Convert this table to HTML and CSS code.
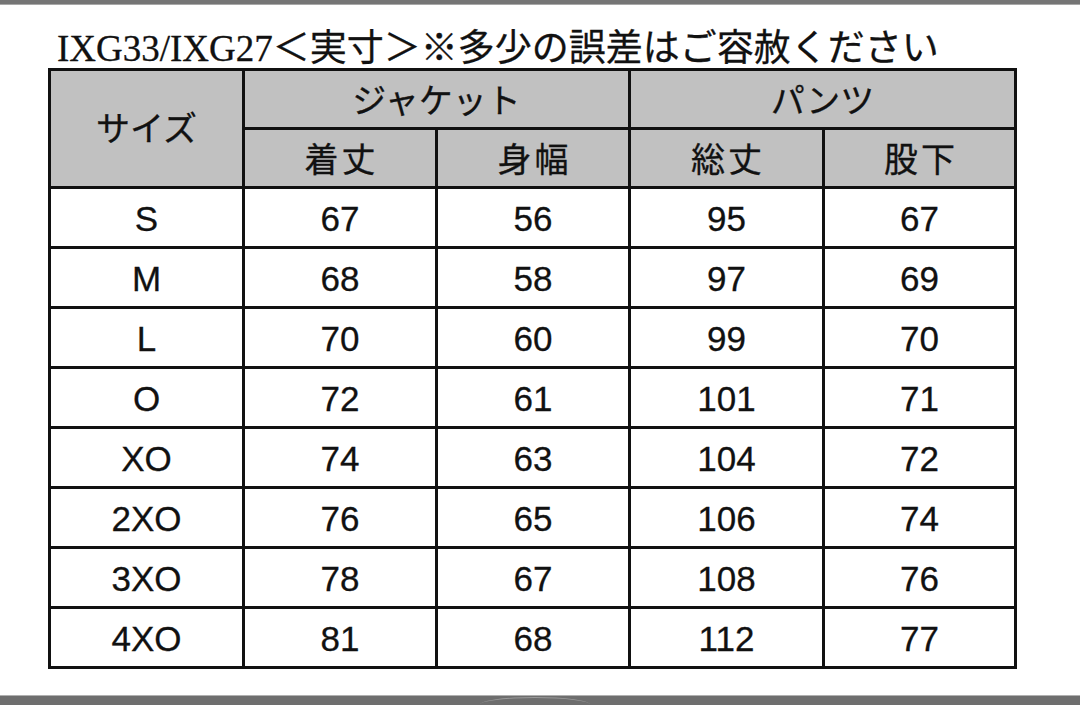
FILE: index.html
```html
<!DOCTYPE html>
<html lang="ja">
<head>
<meta charset="utf-8">
<link rel="stylesheet" href="styles.css">
</head>
<body>
<div class="page">
  <div class="bar-top"></div>
  <div class="content">
    <h1 class="title">IXG33/IXG27＜実寸＞※多少の誤差はご容赦ください</h1>
    <table class="size-table">
      <colgroup>
        <col class="c1"><col class="c2"><col class="c3"><col class="c4"><col class="c5">
      </colgroup>
      <thead>
        <tr class="h1">
          <th rowspan="2" class="size-head">サイズ</th>
          <th colspan="2">ジャケット</th>
          <th colspan="2">パンツ</th>
        </tr>
        <tr class="h2">
          <th class="spaced">着丈</th>
          <th class="spaced">身幅</th>
          <th class="spaced">総丈</th>
          <th class="spaced">股下</th>
        </tr>
      </thead>
      <tbody>
        <tr><td>S</td><td>67</td><td>56</td><td>95</td><td>67</td></tr>
        <tr><td>M</td><td>68</td><td>58</td><td>97</td><td>69</td></tr>
        <tr><td>L</td><td>70</td><td>60</td><td>99</td><td>70</td></tr>
        <tr><td>O</td><td>72</td><td>61</td><td>101</td><td>71</td></tr>
        <tr><td>XO</td><td>74</td><td>63</td><td>104</td><td>72</td></tr>
        <tr><td>2XO</td><td>76</td><td>65</td><td>106</td><td>74</td></tr>
        <tr><td>3XO</td><td>78</td><td>67</td><td>108</td><td>76</td></tr>
        <tr><td>4XO</td><td>81</td><td>68</td><td>112</td><td>77</td></tr>
      </tbody>
    </table>
  </div>
  <div class="bar-bottom"><div class="handle"></div></div>
</div>
</body>
</html>
```

FILE: styles.css
```css
html, body {
  margin: 0;
  padding: 0;
  background: #ffffff;
}
.page {
  width: 1080px;
  height: 705px;
  display: flex;
  flex-direction: column;
  overflow: hidden;
}
.bar-top {
  height: 4px;
  background: #757575;
  border-bottom: 1px solid #a8a8a8;
  flex: none;
}
.content {
  flex: 1;
  padding-left: 48px;
}
.title {
  margin: 0;
  height: 63px;
  padding-left: 9px;
  font-family: "Liberation Serif", "Noto Sans CJK JP", serif;
  font-weight: normal;
  font-size: 37px;
  line-height: 36px;
  padding-top: 26px;
  box-sizing: border-box;
  color: #111;
  white-space: nowrap;
  -webkit-text-stroke: 0.3px #111;
}
.size-table {
  border-collapse: collapse;
  border: 3px solid #111;
  table-layout: fixed;
  width: 966px;
  font-family: "Liberation Sans", "Noto Sans CJK JP", sans-serif;
  color: #111;
}
.c1 { width: 194px; }
.c2 { width: 193px; }
.c3 { width: 193px; }
.c4 { width: 194px; }
.c5 { width: 192px; }
.size-table th,
.size-table td {
  border: 3px solid #111;
  padding: 0;
  text-align: center;
  vertical-align: middle;
}
.size-table th {
  background: #c1c1c1;
  font-family: "Noto Sans CJK JP", sans-serif;
  font-weight: normal;
  font-size: 34px;
  line-height: 1;
  height: 56px;
  -webkit-text-stroke: 0.3px #111;
}
.size-table th.spaced {
  letter-spacing: 3px;
  text-indent: 3px;
}
.size-table th.size-head {
  padding-bottom: 4px;
}
.size-table td {
  font-size: 35px;
  height: 55px;
  line-height: 1;
  padding-top: 2px;
  -webkit-text-stroke: 0.3px #111;
}
.bar-bottom {
  height: 9px;
  background: #6e6e6e;
  border-top: 1px solid #b0b0b0;
  flex: none;
  position: relative;
}
.handle {
  position: absolute;
  left: 480px;
  top: 1px;
  width: 110px;
  height: 14px;
  border-radius: 50%;
  border-top: 1px solid #999;
}
```
